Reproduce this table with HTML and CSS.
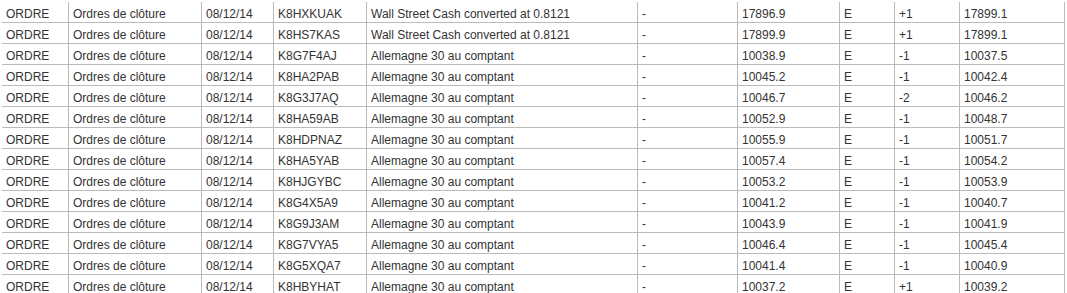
FILE: index.html
```html
<!DOCTYPE html>
<html lang="fr">
<head>
<meta charset="utf-8">
<title>Ordres</title>
<link rel="stylesheet" href="styles.css">
</head>
<body>
<table class="orders">
<colgroup>
<col class="c-type"><col class="c-desc"><col class="c-date"><col class="c-ref"><col class="c-market"><col class="c-dash"><col class="c-level"><col class="c-cur"><col class="c-size"><col class="c-close">
</colgroup>
<tbody>
<tr><td>ORDRE</td><td>Ordres de clôture</td><td>08/12/14</td><td>K8HXKUAK</td><td>Wall Street Cash converted at 0.8121</td><td>-</td><td>17896.9</td><td>E</td><td>+1</td><td>17899.1</td></tr>
<tr><td>ORDRE</td><td>Ordres de clôture</td><td>08/12/14</td><td>K8HS7KAS</td><td>Wall Street Cash converted at 0.8121</td><td>-</td><td>17899.9</td><td>E</td><td>+1</td><td>17899.1</td></tr>
<tr><td>ORDRE</td><td>Ordres de clôture</td><td>08/12/14</td><td>K8G7F4AJ</td><td>Allemagne 30 au comptant</td><td>-</td><td>10038.9</td><td>E</td><td>-1</td><td>10037.5</td></tr>
<tr><td>ORDRE</td><td>Ordres de clôture</td><td>08/12/14</td><td>K8HA2PAB</td><td>Allemagne 30 au comptant</td><td>-</td><td>10045.2</td><td>E</td><td>-1</td><td>10042.4</td></tr>
<tr><td>ORDRE</td><td>Ordres de clôture</td><td>08/12/14</td><td>K8G3J7AQ</td><td>Allemagne 30 au comptant</td><td>-</td><td>10046.7</td><td>E</td><td>-2</td><td>10046.2</td></tr>
<tr><td>ORDRE</td><td>Ordres de clôture</td><td>08/12/14</td><td>K8HA59AB</td><td>Allemagne 30 au comptant</td><td>-</td><td>10052.9</td><td>E</td><td>-1</td><td>10048.7</td></tr>
<tr><td>ORDRE</td><td>Ordres de clôture</td><td>08/12/14</td><td>K8HDPNAZ</td><td>Allemagne 30 au comptant</td><td>-</td><td>10055.9</td><td>E</td><td>-1</td><td>10051.7</td></tr>
<tr><td>ORDRE</td><td>Ordres de clôture</td><td>08/12/14</td><td>K8HA5YAB</td><td>Allemagne 30 au comptant</td><td>-</td><td>10057.4</td><td>E</td><td>-1</td><td>10054.2</td></tr>
<tr><td>ORDRE</td><td>Ordres de clôture</td><td>08/12/14</td><td>K8HJGYBC</td><td>Allemagne 30 au comptant</td><td>-</td><td>10053.2</td><td>E</td><td>-1</td><td>10053.9</td></tr>
<tr><td>ORDRE</td><td>Ordres de clôture</td><td>08/12/14</td><td>K8G4X5A9</td><td>Allemagne 30 au comptant</td><td>-</td><td>10041.2</td><td>E</td><td>-1</td><td>10040.7</td></tr>
<tr><td>ORDRE</td><td>Ordres de clôture</td><td>08/12/14</td><td>K8G9J3AM</td><td>Allemagne 30 au comptant</td><td>-</td><td>10043.9</td><td>E</td><td>-1</td><td>10041.9</td></tr>
<tr><td>ORDRE</td><td>Ordres de clôture</td><td>08/12/14</td><td>K8G7VYA5</td><td>Allemagne 30 au comptant</td><td>-</td><td>10046.4</td><td>E</td><td>-1</td><td>10045.4</td></tr>
<tr><td>ORDRE</td><td>Ordres de clôture</td><td>08/12/14</td><td>K8G5XQA7</td><td>Allemagne 30 au comptant</td><td>-</td><td>10041.4</td><td>E</td><td>-1</td><td>10040.9</td></tr>
<tr><td>ORDRE</td><td>Ordres de clôture</td><td>08/12/14</td><td>K8HBYHAT</td><td>Allemagne 30 au comptant</td><td>-</td><td>10037.2</td><td>E</td><td>+1</td><td>10039.2</td></tr>
</tbody>
</table>
</body>
</html>
```
FILE: styles.css
```css
html, body {
  margin: 0;
  padding: 0;
  overflow: hidden;
  background: #fff;
}

.orders {
  margin: 2px 0 0 2px;
  border-collapse: separate;
  border-spacing: 0;
  table-layout: fixed;
  width: 1063px;
  font-family: "Liberation Sans", Arial, sans-serif;
  font-size: 12px;
  color: #333;
}

.orders td {
  box-sizing: border-box;
  height: 21px;
  padding: 5px 4px 1px 4px;
  line-height: 14px;
  border-right: 1px solid #bbb;
  border-bottom: 1px solid #bbb;
  white-space: nowrap;
  overflow: hidden;
  vertical-align: top;
}

.c-type { width: 67px; }
.c-desc { width: 133px; }
.c-date { width: 72px; }
.c-ref { width: 93px; }
.c-market { width: 271px; }
.c-dash { width: 100px; }
.c-level { width: 102px; }
.c-cur { width: 55px; }
.c-size { width: 65px; }
.c-close { width: 105px; }
```
